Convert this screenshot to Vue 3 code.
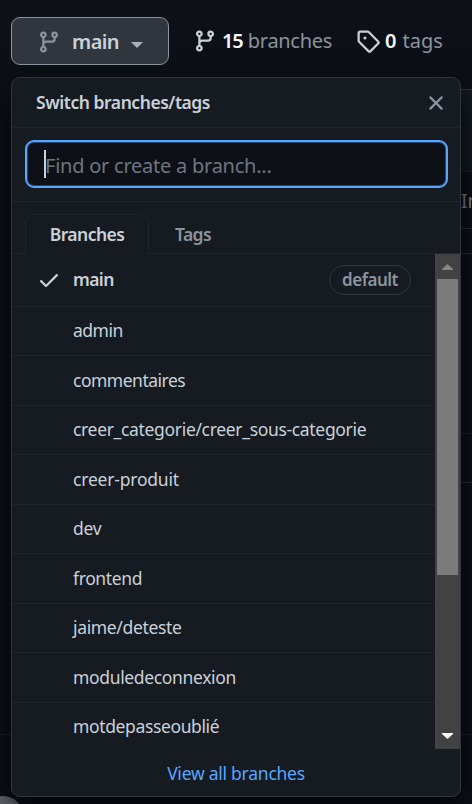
<script setup>
const branches = [
  { name: 'admin', ls: -0.5 },
  { name: 'commentaires', ls: -0.5 },
  { name: 'creer_categorie/creer_sous-categorie', ls: -0.33 },
  { name: 'creer-produit', ls: -0.2 },
  { name: 'dev', ls: -0.25 },
  { name: 'frontend', ls: -0.38 },
  { name: 'jaime/deteste', ls: -0.35 },
  { name: 'moduledeconnexion', ls: -0.35 },
  { name: 'motdepasseoublié', ls: -0.37 },
]
const branchIcon = 'M11.75 2.5a.75.75 0 100 1.5.75.75 0 000-1.5zm-2.25.75a2.25 2.25 0 113 2.122V6A2.5 2.5 0 0110 8.5H6a1 1 0 00-1 1v1.128a2.251 2.251 0 11-1.5 0V5.372a2.25 2.25 0 111.5 0v1.836A2.492 2.492 0 016 7h4a1 1 0 001-1v-.628A2.25 2.25 0 019.5 3.25zM4.25 12a.75.75 0 100 1.5.75.75 0 000-1.5zM3.5 3.25a.75.75 0 111.5 0 .75.75 0 01-1.5 0z'
</script>

<template>
  <main class="page">
    <div class="backdrop">
      <div class="commit-box"><div class="commit-head"></div><div class="commit-row"><span>In</span></div></div>
      <div class="rule r1"></div>
      <div class="rule r2"></div>
      <div class="rule r3"></div>
      <div class="rule r4"></div>
      <div class="avatar"></div>
    </div>

    <header class="toolbar">
      <button class="branch-button">
        <svg class="icon" viewBox="0 0 16 16"><path fill-rule="evenodd" :d="branchIcon" /></svg>
        <span class="current">main</span>
        <i class="caret"></i>
      </button>
      <a class="stat branches-stat">
        <svg class="icon" viewBox="0 0 16 16"><path fill-rule="evenodd" :d="branchIcon" /></svg>
        <strong>15</strong><span>branches</span>
      </a>
      <a class="stat tags-stat">
        <svg class="icon" viewBox="0 0 16 16"><path fill-rule="evenodd" d="M2.5 7.775V2.75a.25.25 0 01.25-.25h5.025a.25.25 0 01.177.073l6.25 6.25a.25.25 0 010 .354l-5.025 5.025a.25.25 0 01-.354 0l-6.25-6.25a.25.25 0 01-.073-.177zm-1.5 0V2.75C1 1.784 1.784 1 2.75 1h5.025c.464 0 .91.184 1.238.513l6.25 6.25a1.75 1.75 0 010 2.474l-5.026 5.026a1.75 1.75 0 01-2.474 0l-6.25-6.25A1.75 1.75 0 011 7.775zM6 5a1 1 0 100 2 1 1 0 000-2z" /></svg>
        <strong>0</strong><span>tags</span>
      </a>
    </header>

    <section class="popup">
      <div class="title-row">
        <span class="title">Switch branches/tags</span>
        <svg class="close" viewBox="0 0 16 16"><path fill-rule="evenodd" d="M3.72 3.72a.75.75 0 011.06 0L8 6.94l3.22-3.22a.75.75 0 111.06 1.06L9.06 8l3.22 3.22a.75.75 0 11-1.06 1.06L8 9.06l-3.22 3.22a.75.75 0 01-1.06-1.06L6.94 8 3.72 4.78a.75.75 0 010-1.06z" /></svg>
      </div>
      <div class="search-row">
        <div class="search"><i class="cursor"></i><span class="placeholder">Find or create a branch...</span></div>
      </div>
      <nav class="tabs">
        <div class="tab active"><span>Branches</span></div>
        <div class="tab"><span>Tags</span></div>
      </nav>
      <div class="list-area">
        <div class="list">
          <div class="row first">
            <svg class="check" viewBox="0 0 16 16"><path fill-rule="evenodd" d="M13.78 4.22a.75.75 0 010 1.06l-7.25 7.25a.75.75 0 01-1.06 0L2.22 9.28a.75.75 0 011.06-1.06L6 10.94l6.72-6.72a.75.75 0 011.06 0z" /></svg>
            <span class="main-name">main</span>
            <span class="badge"><span>default</span></span>
          </div>
          <div v-for="b in branches" :key="b.name" class="row">
            <span class="name" :style="{ letterSpacing: b.ls + 'px' }">{{ b.name }}</span>
          </div>
        </div>
        <div class="scrollbar">
          <svg class="arrow" viewBox="0 0 25 25"><path d="M7 16h11v-1L12.5 10 7 15z" fill="#868686" /></svg>
          <div class="thumb"></div>
          <svg class="arrow" viewBox="0 0 25 25"><path d="M7 9h11v1L12.5 15 7 10z" fill="#fff" /></svg>
        </div>
      </div>
      <footer class="footer"><a>View all branches</a></footer>
    </section>
  </main>
</template>

<style>
html, body { margin: 0; background: #0d1117; }
</style>

<style scoped>
* { box-sizing: border-box; }
.page {
  position: relative;
  width: 472px;
  height: 804px;
  overflow: hidden;
  background: #0d1117;
  color: #c9d1d9;
  font-family: "Noto Sans", "Open Sans", sans-serif;
  font-size: 17.5px;
  white-space: nowrap;
}
.backdrop { position: absolute; inset: 0; }
.commit-box {
  position: absolute;
  left: 24px;
  top: 89px;
  width: 500px;
  height: 140px;
  border: 1px solid #30363d;
  background: #0d1117;
}
.commit-head { height: 82px; border-bottom: 1px solid #21262d; background: #161b22; }
.commit-row { padding: 16px 0 0 436px; font-size: 19px; color: #8b949e; }
.rule { position: absolute; left: 24px; width: 448px; height: 1px; background: #21262d; }
.r1 { top: 253px; background: #30363d; }
.r2 { top: 433px; }
.r3 { top: 482px; background: #30363d; }
.r4 { top: 734px; left: 0; width: 472px; }
.avatar {
  position: absolute;
  left: -17px;
  top: 796px;
  width: 40px;
  height: 40px;
  border-radius: 50%;
  background: #6a6e76;
}
.toolbar { position: relative; z-index: 2; display: flex; height: 77px; padding: 17px 0 0 11px; }
.branch-button {
  display: flex;
  align-items: center;
  width: 158px;
  height: 48px;
  padding: 2px 0 0 25px;
  border: 1px solid #8b949e;
  border-radius: 9px;
  background: #30363d;
  color: #c9d1d9;
  font-family: inherit;
}
.icon { flex: none; width: 24px; height: 24px; fill: currentColor; }
.branch-button .icon { color: #8b949e; }
.current { width: 47px; margin-left: 11px; font-size: 20px; font-weight: 600; line-height: 28px; letter-spacing: -0.6px; }
.caret { margin: 5px 0 0 12px; border: 6px solid transparent; border-top-color: #a9b0b8; border-bottom: 0; }
.stat { display: flex; align-items: center; height: 28px; margin-top: 10px; font-size: 20px; line-height: 28px; color: #8b949e; }
.stat .icon { color: #c9d1d9; }
.stat strong { color: #f0f6fc; font-weight: 600; }
.branches-stat { width: 139px; margin-left: 24px; }
.branches-stat strong { width: 21px; margin-left: 5px; letter-spacing: -1.2px; }
.branches-stat span { margin-left: 5px; letter-spacing: -0.3px; }
.tags-stat { margin-left: 24px; }
.tags-stat strong { margin-left: 5px; }
.tags-stat span { margin-left: 6px; }
.popup {
  position: relative;
  width: 450px;
  height: 720px;
  margin-left: 11px;
  display: flex;
  flex-direction: column;
  border: 1px solid #30363d;
  border-radius: 9px;
  background: #161b22;
  box-shadow: 0 12px 36px #010409;
}
.title-row { display: flex; justify-content: space-between; align-items: center; height: 50px; padding: 0 12px 0 24px; border-bottom: 1px solid #21262d; }
.title { padding-bottom: 2px; font-weight: 600; letter-spacing: -0.45px; }
.close { width: 24px; height: 24px; fill: #8b949e; }
.search-row { height: 74px; padding: 12px 12px 0 13px; border-bottom: 1px solid #21262d; }
.search { display: flex; align-items: center; height: 48px; padding-left: 17px; border: 2px solid #58a6ff; border-radius: 9px; background: #0d1117; box-shadow: inset 0 0 0 1px #27456c; }
.cursor { width: 2px; height: 28px; background: #c9d1d9; }
.placeholder { margin-left: -1px; padding-top: 2px; color: #6e7681; font-size: 20px; letter-spacing: -0.24px; }
.tabs { display: flex; align-items: flex-end; height: 52px; padding-left: 13px; box-shadow: inset 0 -1px #21262d; }
.tab { display: flex; align-items: center; justify-content: center; height: 40px; padding-bottom: 1px; color: #8b949e; font-weight: 600; border: 1px solid transparent; border-bottom: 0; width: 88px; letter-spacing: -0.55px; }
.tab.active { width: 124px; color: #c9d1d9; border-color: #21262d; border-radius: 9px 9px 0 0; background: #161b22; }
.list-area { display: flex; height: 495px; }
.list { flex: 1; overflow: hidden; }
.row { display: flex; align-items: center; height: 49.5px; padding: 0 0 1px 61px; border-bottom: 1px solid #21262d; }
.first { height: 52.6px; padding: 0 0 0 25px; }
.check { width: 24px; height: 24px; fill: #c9d1d9; }
.main-name { margin-left: 12px; padding-bottom: 1px; font-weight: 600; letter-spacing: -0.6px; }
.badge { display: flex; align-items: center; justify-content: center; width: 82px; height: 30px; margin: 0 24px 0 auto; padding-bottom: 1px; border: 1px solid #30363d; border-radius: 15px; color: #8b949e; font-weight: 600; font-size: 17px; letter-spacing: -0.5px; }
.scrollbar { width: 25px; background: #424242; }
.arrow { display: block; width: 25px; height: 25px; }
.thumb { width: 21px; height: 296px; margin: 0 2px 149px; background: #7b7b7b; }
.footer { display: flex; height: 47px; align-items: center; justify-content: center; color: #58a6ff; letter-spacing: -0.25px; }
</style>
